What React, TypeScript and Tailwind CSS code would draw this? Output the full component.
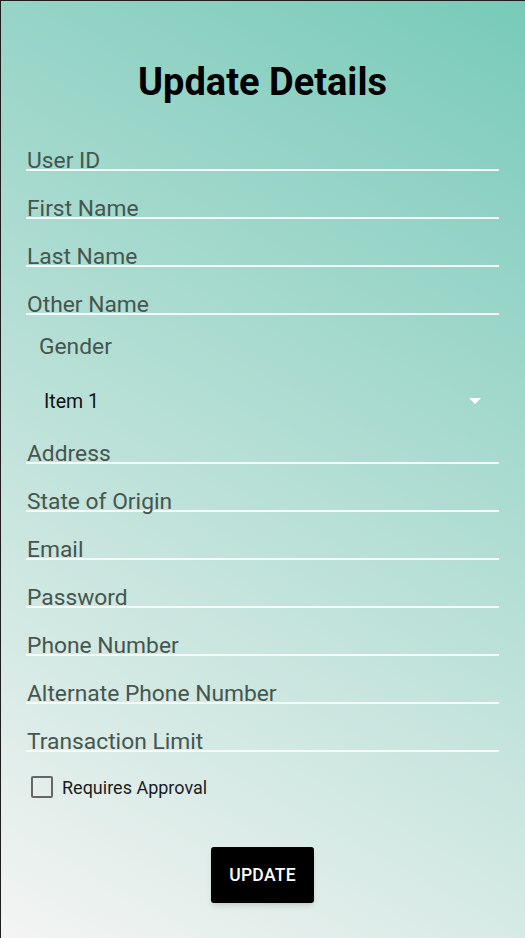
import { useState } from "react";

const fieldsTop = ["User ID", "First Name", "Last Name", "Other Name"];
const fieldsBottom = [
  "Address",
  "State of Origin",
  "Email",
  "Password",
  "Phone Number",
  "Alternate Phone Number",
  "Transaction Limit",
];

function Field({ label }: { label: string }) {
  return (
    <div className="h-12 flex items-end border-b-2 border-[#f4fbf9]">
      <span className="pl-[1px] text-[22.8px] leading-[17px] text-[#47554f]">{label}</span>
    </div>
  );
}

export default function App() {
  const [checked, setChecked] = useState(false);

  return (
    <div className="w-[525px] h-[938px] border-l border-t border-[#1e1e1e] bg-[linear-gradient(29deg,#f4f4f3,#78cab8)] font-['Roboto',sans-serif] flex flex-col pl-[25px] pr-[26px]">
      <h1 className="mt-[62px] text-center text-[38px] leading-none font-bold text-black">
        Update Details
      </h1>

      <div className="mt-[22px] flex flex-col">
        {fieldsTop.map((f) => (
          <Field key={f} label={f} />
        ))}
      </div>

      <div className="mt-[22px] pl-[13px] text-[22.8px] leading-[20px] text-[#47554f]">Gender</div>
      <div className="mt-[35px] h-[20px] flex items-start justify-between pl-[18px] pr-[18px]">
        <span className="text-[19.5px] leading-[20px] text-[#111]">Item 1</span>
        <svg width="12" height="6" viewBox="0 0 12 6" className="mt-[6px]">
          <path d="M0 0h12L6 6z" fill="#ffffff" />
        </svg>
      </div>

      <div className="mt-[4px] flex flex-col">
        {fieldsBottom.map((f) => (
          <Field key={f} label={f} />
        ))}
      </div>

      <label className="mt-[23px] ml-[5px] flex items-center gap-[9px] cursor-pointer">
        <span
          onClick={() => setChecked(!checked)}
          className="w-[22px] h-[22px] rounded-[2px] border-2 border-[#666] flex items-center justify-center"
        >
          {checked && <span className="w-3 h-3 bg-[#666]" />}
        </span>
        <span className="pt-[2px] text-[18px] leading-[22px] text-[#1c1c1c]">Requires Approval</span>
      </label>

      <div className="mt-[48px] flex justify-center">
        <button className="w-[103px] h-[56px] bg-black rounded-[3px] shadow-md text-white text-[17.5px] font-medium tracking-[0.3px]">
          UPDATE
        </button>
      </div>
    </div>
  );
}
